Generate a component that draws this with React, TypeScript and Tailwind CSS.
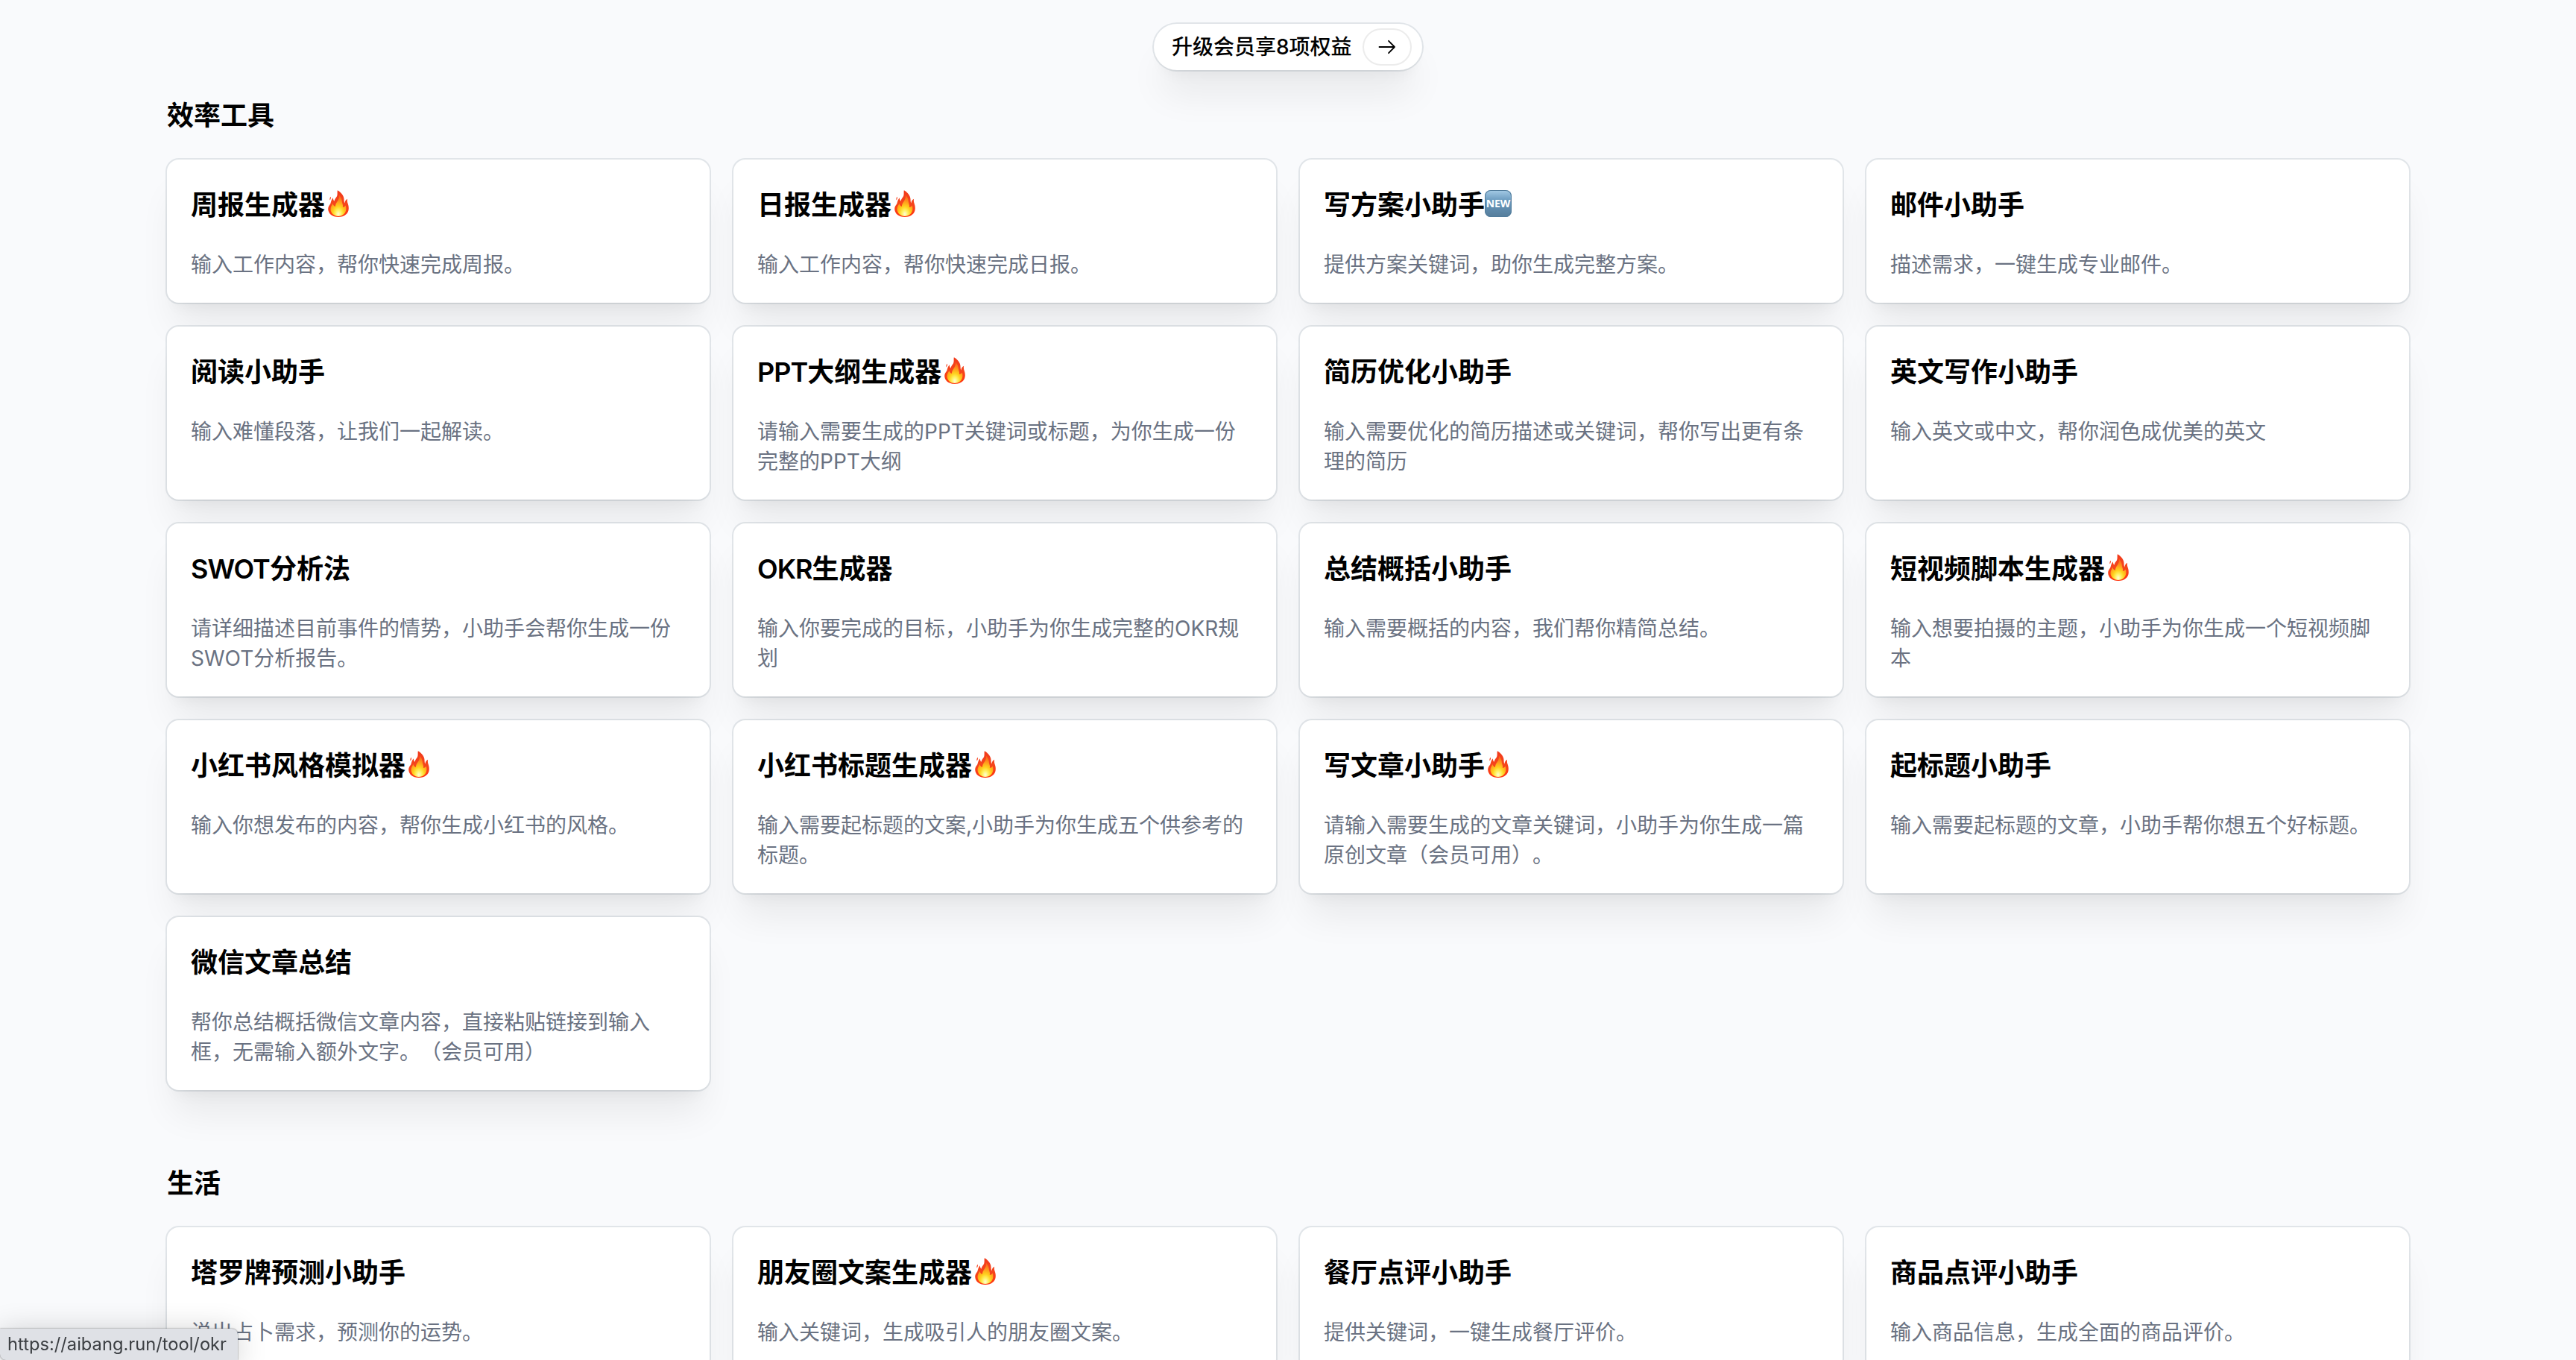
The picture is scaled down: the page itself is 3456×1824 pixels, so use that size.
type Tool = {
    title: string;
    desc: string;
    badge?: "hot" | "new";
};

const efficiencyTools: Tool[] = [
    { title: "周报生成器", desc: "输入工作内容，帮你快速完成周报。", badge: "hot" },
    { title: "日报生成器", desc: "输入工作内容，帮你快速完成日报。", badge: "hot" },
    { title: "写方案小助手", desc: "提供方案关键词，助你生成完整方案。", badge: "new" },
    { title: "邮件小助手", desc: "描述需求，一键生成专业邮件。" },
    { title: "阅读小助手", desc: "输入难懂段落，让我们一起解读。" },
    { title: "PPT大纲生成器", desc: "请输入需要生成的PPT关键词或标题，为你生成一份完整的PPT大纲", badge: "hot" },
    { title: "简历优化小助手", desc: "输入需要优化的简历描述或关键词，帮你写出更有条理的简历" },
    { title: "英文写作小助手", desc: "输入英文或中文，帮你润色成优美的英文" },
    { title: "SWOT分析法", desc: "请详细描述目前事件的情势，小助手会帮你生成一份SWOT分析报告。" },
    { title: "OKR生成器", desc: "输入你要完成的目标，小助手为你生成完整的OKR规划" },
    { title: "总结概括小助手", desc: "输入需要概括的内容，我们帮你精简总结。" },
    { title: "短视频脚本生成器", desc: "输入想要拍摄的主题，小助手为你生成一个短视频脚本", badge: "hot" },
    { title: "小红书风格模拟器", desc: "输入你想发布的内容，帮你生成小红书的风格。", badge: "hot" },
    { title: "小红书标题生成器", desc: "输入需要起标题的文案,小助手为你生成五个供参考的标题。", badge: "hot" },
    { title: "写文章小助手", desc: "请输入需要生成的文章关键词，小助手为你生成一篇原创文章（会员可用）。", badge: "hot" },
    { title: "起标题小助手", desc: "输入需要起标题的文章，小助手帮你想五个好标题。" },
    { title: "微信文章总结", desc: "帮你总结概括微信文章内容，直接粘贴链接到输入框，无需输入额外文字。（会员可用）" },
];

const lifeTools: Tool[] = [
    { title: "塔罗牌预测小助手", desc: "说出占卜需求，预测你的运势。" },
    { title: "朋友圈文案生成器", desc: "输入关键词，生成吸引人的朋友圈文案。", badge: "hot" },
    { title: "餐厅点评小助手", desc: "提供关键词，一键生成餐厅评价。" },
    { title: "商品点评小助手", desc: "输入商品信息，生成全面的商品评价。" },
];

const FireIcon = () => (
    <svg className="mb-1 h-9 w-9 shrink-0" viewBox="0 0 36 36">
        <defs>
            <linearGradient id="flame" x1="0" y1="0" x2="0" y2="1">
                <stop offset="0" stopColor="#f23a1c" />
                <stop offset="0.5" stopColor="#f5461c" />
                <stop offset="1" stopColor="#ff3510" />
            </linearGradient>
            <radialGradient id="core" cx="0.5" cy="0.9" r="0.85">
                <stop offset="0" stopColor="#fffcd8" />
                <stop offset="0.2" stopColor="#fff36a" />
                <stop offset="0.42" stopColor="#ffd21f" />
                <stop offset="0.7" stopColor="#ff981c" />
                <stop offset="1" stopColor="#f9601a" />
            </radialGradient>
        </defs>
        <path
            fill="url(#flame)"
            d="M16.800 0.200c-0.600 3.800 0.600 6.400-1.600 9.400c-1.300 1.600-2.300 3.400-2.700 5.200c-1-0.900-1.700-2.200-1.500-4.600c-2.400 2.400-2.900 5.200-3.700 8C5.600 20.800 4.200 22.200 4.200 25.200C4.400 31.500 9.600 35.900 17.900 35.900S31.800 31.300 31.800 24.400c0-2.600-0.500-4.800-1.400-7.200c-0.500-1.400-0.700-3.400-0.300-5.400c-2.200 0.900-3.400 3-3.600 5.700C25.300 15.800 25.800 13 25.300 10.600C24.300 5.600 20.600 2.400 16.800 0.200z"
        />
        <path fill="#f5502e" d="M7.900 8.700c-1.500 1.200-1.800 3-1.400 4.800c1.200-1.300 1.900-3 1.400-4.800z" />
        <path
            fill="url(#core)"
            d="M19 6.500c0 3.800-0.400 6.300-2.800 9.200c-1.400 1.700-2.300 4-2.300 6.400c-1.800-0.600-3-1.900-3.400-4C9.200 20.500 7.400 22.600 7.500 25.800C7.700 31 12.200 34.900 17.900 34.900S28.100 31 28.400 25.400c0.100-1.700-0.100-3.400-0.700-5c-0.900 1.500-2.100 2.400-3.900 2.400c0.900-2.700-0.500-4.300-0.900-6.900C22.600 12.600 22.200 9.800 19 6.500z"
        />
    </svg>
);

const NewIcon = () => (
    <span className="mb-1 flex h-9 w-9 shrink-0 items-center justify-center rounded-lg bg-linear-to-b from-[#a5cbe6] via-[#6899bd] via-40% to-[#567d9b] font-['Open_Sans'] text-[14px] leading-none font-bold text-white ring-1 ring-[#517c9c] ring-inset">
        NEW
    </span>
);

const ToolCard = ({ title, desc, badge }: Tool) => {
    // Latin prefixes such as PPT or SWOT are set a little tighter
    const latin = title.match(/^[A-Z]+/)?.[0] ?? "";

    return (
        <div className="rounded-2xl bg-white p-8 shadow-[0_40px_50px_-10px_rgb(0_0_0/0.07),0_16px_20px_-12px_rgb(0_0_0/0.05)] ring-2 ring-[#0f3040]/10">
            <h3 className="flex h-14 items-center pt-0.5 text-4xl leading-[54px] font-semibold text-black">
                {latin && <span className="tracking-[-1px]">{latin}</span>}
                {title.slice(latin.length)}
                {badge === "hot" && <FireIcon />}
                {badge === "new" && <NewIcon />}
            </h3>
            <p className="-mb-px mt-[33px] text-[28px] leading-10 text-gray-500">{desc}</p>
        </div>
    );
};

const Section = ({ name, tools }: { name: string; tools: Tool[] }) => (
    <section className="mb-24">
        <h2 className="mb-[31px] pt-px text-4xl leading-14 font-semibold text-black">{name}</h2>
        <div className="grid grid-cols-4 gap-8">
            {tools.map((tool) => (
                <ToolCard key={tool.title} {...tool} />
            ))}
        </div>
    </section>
);

const App = () => {
    return (
        <div className="h-[1824px] w-[3456px] overflow-hidden bg-[#f9fafc] px-56 pt-8 font-['Inter','Noto_Sans_CJK_SC',sans-serif] [text-spacing-trim:space-all]">
            <div className="flex h-[94px] items-start justify-center">
                <a className="flex h-[62px] w-[360px] items-center justify-between rounded-full bg-white pr-3.5 pl-6 text-[28px] font-medium whitespace-nowrap text-black shadow-[0_40px_50px_-10px_rgb(0_0_0/0.08),0_16px_20px_-12px_rgb(0_0_0/0.06)] ring-2 ring-[#0f3040]/10">
                    升级会员享8项权益
                    <span className="flex h-[50px] w-[66px] items-center justify-center rounded-full border-2 border-[#ececec]">
                        <svg className="h-6 w-6" viewBox="0 0 24 24" fill="none" stroke="currentColor" strokeWidth="1.8">
                            <path strokeLinecap="round" strokeLinejoin="round" d="M1.500 12h20.500M14 3.800l8 8.200l-8 8.200" />
                        </svg>
                    </span>
                </a>
            </div>

            <Section name="效率工具" tools={efficiencyTools} />
            <Section name="生活" tools={lifeTools} />

            {/* Link preview bar */}
            <div className="fixed bottom-0 left-0 flex h-[42px] w-[319px] items-center rounded-tr-lg rounded-bl-lg bg-[#dfe1e6] pl-2.5 text-[23.7px] whitespace-nowrap text-[#3c3f43] shadow-[0_0_2px_rgb(0_0_0/0.6),0_4px_40px_rgb(0_0_0/0.2)]">
                https://aibang.run/tool/okr
            </div>
        </div>
    );
};

export default App;
